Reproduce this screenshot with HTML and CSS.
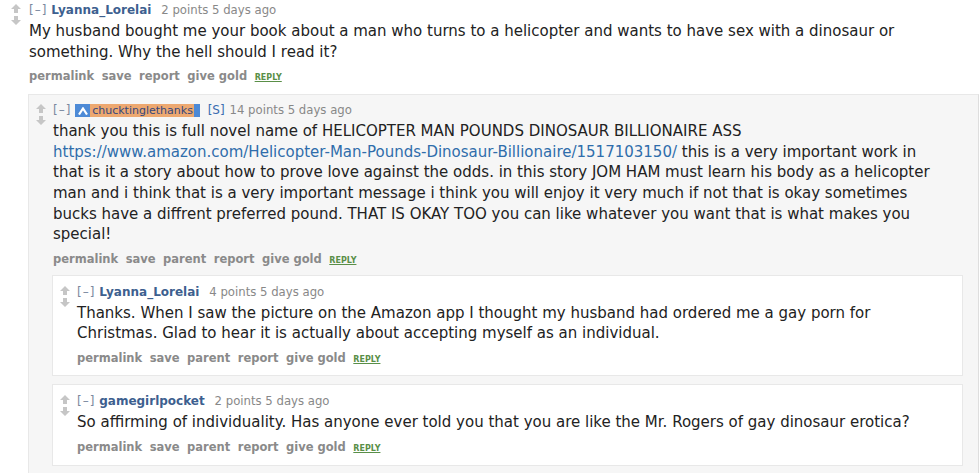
FILE: index.html
```html
<!DOCTYPE html>
<html>
<head>
<meta charset="utf-8">
<link rel="stylesheet" href="styles.css">
</head>
<body>
<div class="comment top">
  <div class="arrows">
    <svg class="arrow" width="10" height="9" viewBox="0 0 10 9"><path d="M5 0 L10 5 L7 5 L7 9 L3 9 L3 5 L0 5 Z" fill="#c6c6c6"/></svg>
    <svg class="arrow" width="10" height="9" viewBox="0 0 10 9"><path d="M5 9 L10 4 L7 4 L7 0 L3 0 L3 4 L0 4 Z" fill="#c6c6c6"/></svg>
  </div>
  <div class="entry">
    <p class="tagline"><span class="expand">[–]</span> <a class="author">Lyanna_Lorelai</a> <span class="score">2 points 5 days ago</span></p>
    <div class="md">My husband bought me your book about a man who turns to a helicopter and wants to have sex with a dinosaur or<br>something. Why the hell should I read it?</div>
    <ul class="buttons"><li>permalink</li><li>save</li><li>report</li><li>give gold</li><li class="reply">reply</li></ul>
    <div class="child">
      <div class="comment box grey">
        <div class="arrows">
          <svg class="arrow" width="10" height="9" viewBox="0 0 10 9"><path d="M5 0 L10 5 L7 5 L7 9 L3 9 L3 5 L0 5 Z" fill="#c6c6c6"/></svg>
          <svg class="arrow" width="10" height="9" viewBox="0 0 10 9"><path d="M5 9 L10 4 L7 4 L7 0 L3 0 L3 4 L0 4 Z" fill="#c6c6c6"/></svg>
        </div>
        <div class="entry">
          <p class="tagline"><span class="expand">[–]</span> <span class="flair"><span class="snoo"><svg width="10" height="8" viewBox="0 0 10 8"><path d="M1 7.5 L5 1.5 L9 7.5" fill="none" stroke="#fff" stroke-width="2.2"/></svg></span><span class="op">chucktinglethanks</span><span class="bar"></span></span> <span class="sub">[S]</span> <span class="score near">14 points 5 days ago</span></p>
          <div class="md">thank you this is full novel name of HELICOPTER MAN POUNDS DINOSAUR BILLIONAIRE ASS<br><a class="link">https://www.amazon.com/Helicopter-Man-Pounds-Dinosaur-Billionaire/1517103150/</a> this is a very important work in<br>that is it a story about how to prove love against the odds. in this story JOM HAM must learn his body as a helicopter<br>man and i think that is a very important message i think you will enjoy it very much if not that is okay sometimes<br>bucks have a diffrent preferred pound. THAT IS OKAY TOO you can like whatever you want that is what makes you<br>special!</div>
          <ul class="buttons"><li>permalink</li><li>save</li><li>parent</li><li>report</li><li>give gold</li><li class="reply">reply</li></ul>
          <div class="child">
            <div class="comment box white">
              <div class="arrows">
                <svg class="arrow" width="10" height="9" viewBox="0 0 10 9"><path d="M5 0 L10 5 L7 5 L7 9 L3 9 L3 5 L0 5 Z" fill="#c6c6c6"/></svg>
                <svg class="arrow" width="10" height="9" viewBox="0 0 10 9"><path d="M5 9 L10 4 L7 4 L7 0 L3 0 L3 4 L0 4 Z" fill="#c6c6c6"/></svg>
              </div>
              <div class="entry">
                <p class="tagline"><span class="expand">[–]</span> <a class="author">Lyanna_Lorelai</a> <span class="score">4 points 5 days ago</span></p>
                <div class="md">Thanks. When I saw the picture on the Amazon app I thought my husband had ordered me a gay porn for<br>Christmas. Glad to hear it is actually about accepting myself as an individual.</div>
                <ul class="buttons"><li>permalink</li><li>save</li><li>parent</li><li>report</li><li>give gold</li><li class="reply">reply</li></ul>
              </div>
            </div>
            <div class="comment box white last">
              <div class="arrows">
                <svg class="arrow" width="10" height="9" viewBox="0 0 10 9"><path d="M5 0 L10 5 L7 5 L7 9 L3 9 L3 5 L0 5 Z" fill="#c6c6c6"/></svg>
                <svg class="arrow" width="10" height="9" viewBox="0 0 10 9"><path d="M5 9 L10 4 L7 4 L7 0 L3 0 L3 4 L0 4 Z" fill="#c6c6c6"/></svg>
              </div>
              <div class="entry">
                <p class="tagline"><span class="expand">[–]</span> <a class="author">gamegirlpocket</a> <span class="score">2 points 5 days ago</span></p>
                <div class="md">So affirming of individuality. Has anyone ever told you that you are like the Mr. Rogers of gay dinosaur erotica?</div>
                <ul class="buttons"><li>permalink</li><li>save</li><li>parent</li><li>report</li><li>give gold</li><li class="reply">reply</li></ul>
              </div>
            </div>
          </div>
        </div>
      </div>
    </div>
  </div>
</div>
</body>
</html>
```
FILE: styles.css
```css
html, body {
  margin: 0;
  padding: 0;
  background: #fff;
  font-family: "DejaVu Sans", Verdana, sans-serif;
  color: #222;
  overflow: hidden;
}
.comment {
  display: flex;
  align-items: flex-start;
}
.top {
  padding: 2px 0 0 11px;
}
.arrows {
  width: 10px;
  margin-right: 8px;
  padding-top: 2px;
  display: flex;
  flex-direction: column;
  gap: 3px;
}
.arrow {
  display: block;
}
.entry {
  flex: 1;
  min-width: 0;
}
.tagline {
  margin: 0;
  font-size: 12px;
  line-height: 16px;
  height: 16px;
  color: #888;
  white-space: nowrap;
}
.expand {
  color: #7a889e;
  letter-spacing: 1px;
}
.author {
  color: #3d5f8f;
  font-weight: bold;
}
.score {
  margin-left: 6px;
  font-size: 11.7px;
  color: #888;
}
.score.near {
  margin-left: 1px;
}
.md {
  font-size: 15px;
  line-height: 20.6px;
  color: #222;
  white-space: nowrap;
  margin-top: 3px;
}
.link {
  color: #2f6dab;
}
.buttons {
  list-style: none;
  margin: 6px 0 0 0;
  padding: 0;
  height: 16px;
  display: flex;
  align-items: baseline;
  gap: 7.5px;
  font-size: 11.5px;
  line-height: 16px;
  font-weight: bold;
  color: #8a8a8a;
}
.buttons .reply {
  font-size: 8px;
  color: #5a8f48;
  text-transform: uppercase;
  text-decoration: underline;
}
.child {
  margin-left: -1px;
  margin-top: 10px;
}
.box {
  border: 1px solid #e8e8e8;
  padding: 7px 0 8px 7px;
}
.box .arrows {
  margin-right: 7px;
}
.grey {
  background: #f6f6f6;
  border-right-color: #dedede;
  margin-right: 1px;
  padding-bottom: 40px;
}
.grey .child {
  margin-top: 8px;
}
.white {
  background: #fff;
  margin-right: 15px;
  margin-bottom: 8px;
  padding-top: 8px;
  padding-bottom: 9px;
}
.white.last {
  padding-bottom: 10px;
}
.flair {
  display: inline-flex;
  align-items: center;
  height: 13px;
  vertical-align: top;
  margin-top: 2px;
}
.snoo {
  background: #4d8ad6;
  height: 13px;
  width: 15px;
  display: inline-flex;
  align-items: center;
  justify-content: center;
}
.op {
  background: #eda870;
  color: #34477e;
  font-size: 11px;
  height: 13px;
  line-height: 13px;
  padding: 0 1px 0 2px;
  letter-spacing: 0;
}
.bar {
  background: #4d8ad6;
  width: 6px;
  height: 13px;
}
.sub {
  color: #3a6cb0;
  margin-left: 4px;
}
```
